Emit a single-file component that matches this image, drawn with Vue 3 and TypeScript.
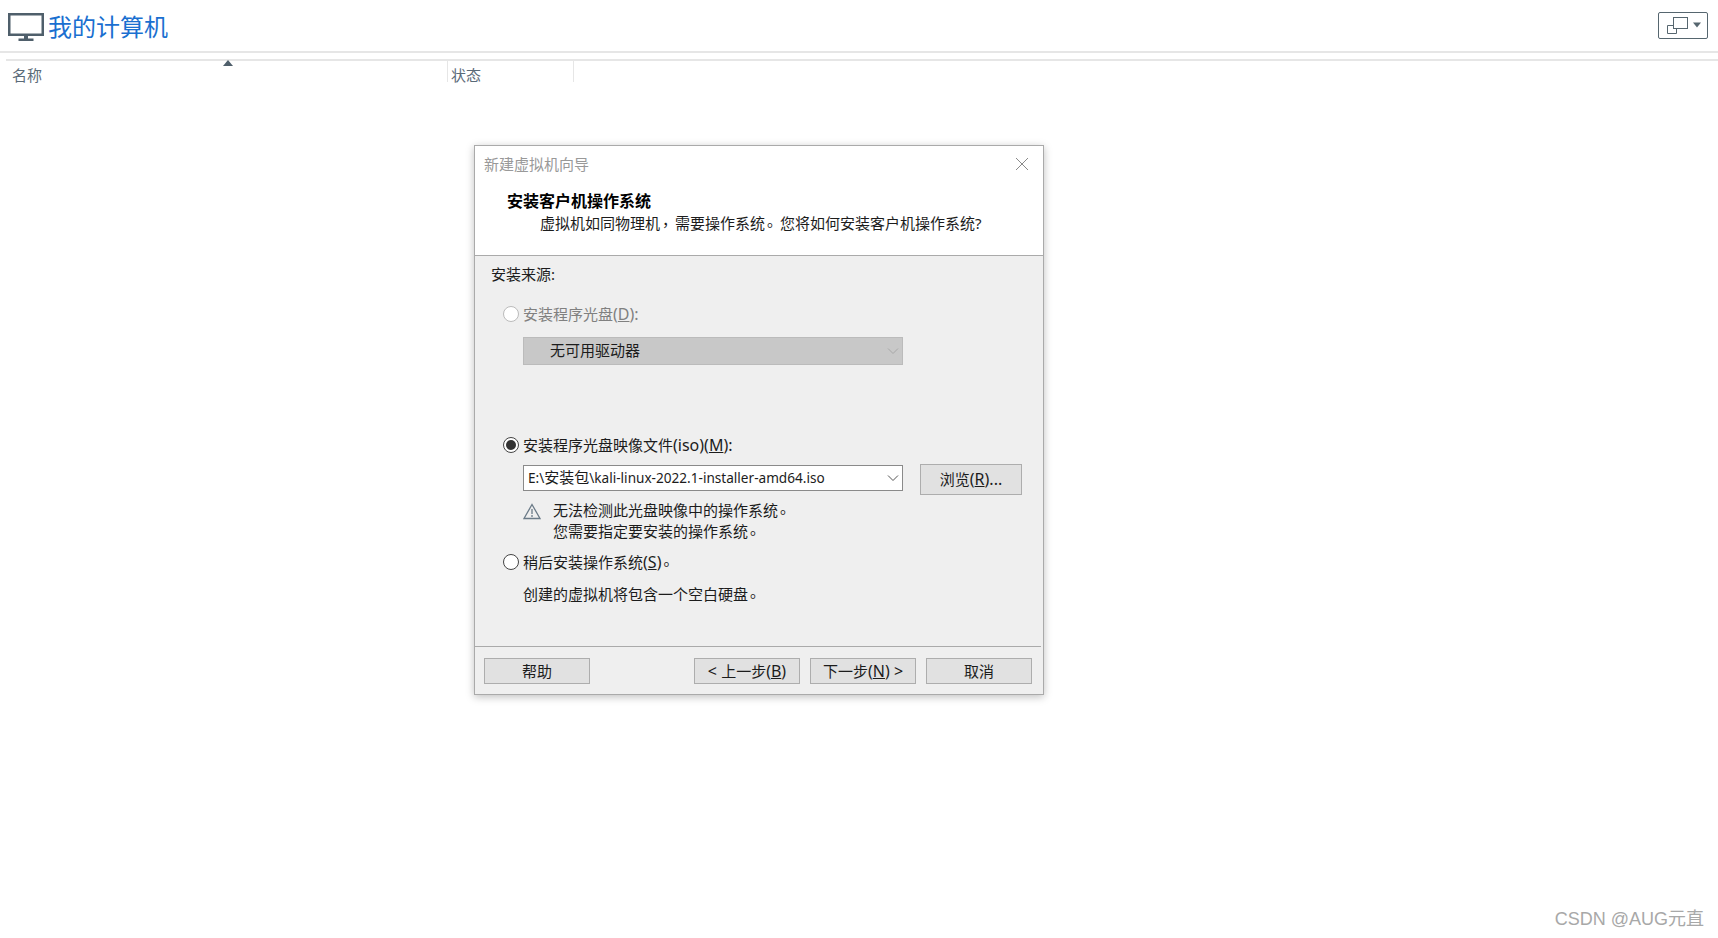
<template>
  <div class="page">
    <header class="top">
      <div class="title-wrap">
        <svg class="monitor" width="36" height="28" viewBox="0 0 36 28">
          <rect x="1.25" y="1.25" width="33.5" height="20.5" fill="none" stroke="#4f5f6b" stroke-width="2.5" />
          <rect x="16" y="22" width="4" height="4" fill="#4f5f6b" />
          <rect x="10.5" y="25.5" width="15" height="2.5" fill="#4f5f6b" />
        </svg>
        <span class="title">我的计算机</span>
      </div>
      <button class="view-btn">
        <svg width="36" height="19" viewBox="0 0 36 19">
          <rect x="7.5" y="1.5" width="14" height="11" fill="#fff" stroke="#56666f" />
          <path d="M7 9.5H1.5V17.5H10.5V13" fill="none" stroke="#56666f" />
          <path d="M27 6.5h8l-4 5z" fill="#56666f" />
        </svg>
      </button>
    </header>

    <div class="columns">
      <div class="col col-name">
        <span>名称</span>
        <i class="sort-arrow"></i>
      </div>
      <div class="col col-state"><span>状态</span></div>
    </div>

    <section class="dialog">
      <div class="dialog-head">
        <div class="titlebar">
          <span class="titlebar-text">新建虚拟机向导</span>
          <svg width="14" height="14" viewBox="0 0 14 14">
            <path d="M1 1l12 12M13 1L1 13" stroke="#8a8a8a" stroke-width="1" fill="none" />
          </svg>
        </div>
        <div class="heading">安装客户机操作系统</div>
        <div class="subheading">虚拟机如同物理机<span class="punct">，</span>需要操作系统<span class="punct">。</span>您将如何安装客户机操作系统?</div>
      </div>

      <div class="dialog-body">
        <div class="line source">安装来源:</div>

        <label class="line option option-disc disabled">
          <span class="radio"></span>
          <span>安装程序光盘<span class="latin">(<u>D</u>):</span></span>
        </label>
        <div class="select select-off">
          <span class="select-text">无可用驱动器</span>
          <svg width="12" height="8" viewBox="0 0 12 8"><path d="M1 1.5l5 5 5-5" fill="none" stroke="#a8a8a8" /></svg>
        </div>

        <label class="line option option-iso">
          <span class="radio checked"><span class="dot"></span></span>
          <span>安装程序光盘映像文件<span class="latin">(iso)(<u>M</u>):</span></span>
        </label>
        <div class="iso-row">
          <div class="select select-on">
            <span class="select-text">E:\<span class="cjk">安装包</span>\kali-linux-2022.1-installer-amd64.iso</span>
            <svg width="12" height="8" viewBox="0 0 12 8"><path d="M1 1.5l5 5 5-5" fill="none" stroke="#555" /></svg>
          </div>
          <button class="btn browse"><span class="btn-text">浏览<span class="latin">(<u>R</u>)...</span></span></button>
        </div>
        <div class="warning">
          <svg width="18" height="17" viewBox="0 0 18 17">
            <path d="M9 1.5L17 15.5H1z" fill="none" stroke="#6b7b88" stroke-width="1.3" />
            <path d="M9 6v5M9 12v2" stroke="#6b7b88" stroke-width="1.3" />
          </svg>
          <div class="warning-text">
            <div>无法检测此光盘映像中的操作系统<span class="punct">。</span></div>
            <div>您需要指定要安装的操作系统<span class="punct">。</span></div>
          </div>
        </div>

        <label class="line option option-later">
          <span class="radio"></span>
          <span>稍后安装操作系统<span class="latin">(<u>S</u>)</span><span class="punct">。</span></span>
        </label>
        <div class="line blank-note">创建的虚拟机将包含一个空白硬盘<span class="punct">。</span></div>
      </div>

      <footer class="dialog-foot">
        <button class="btn"><span class="btn-text">帮助</span></button>
        <div class="foot-right">
          <button class="btn"><span class="btn-text"><span class="latin">&lt; </span>上一步<span class="latin">(<u>B</u>)</span></span></button>
          <button class="btn"><span class="btn-text">下一步<span class="latin">(<u>N</u>) &gt;</span></span></button>
          <button class="btn"><span class="btn-text">取消</span></button>
        </div>
      </footer>
    </section>

    <div class="watermark">CSDN @AUG元直</div>
  </div>
</template>

<script setup lang="ts">
</script>

<style>
html,
body {
  margin: 0;
  background: #fff;
}
</style>

<style scoped>
.page {
  position: relative;
  width: 1718px;
  height: 938px;
  overflow: hidden;
  background: #fff;
  font-family: "Noto Sans", "Noto Sans CJK SC", sans-serif;
  color: #1c1c1c;
}

.top {
  display: flex;
  align-items: center;
  justify-content: space-between;
  height: 53px;
  box-sizing: border-box;
  padding: 2px 10px 0 8px;
  border-bottom: 2px solid #e6e6e6;
}

.title-wrap {
  display: flex;
  align-items: center;
  gap: 4px;
}

.title {
  font-size: 24px;
  line-height: 32px;
  color: #1a6fd0;
}

.view-btn {
  display: flex;
  align-items: center;
  justify-content: center;
  width: 50px;
  height: 27px;
  margin-top: -3px;
  padding: 0 0 0 2px;
  background: #fff;
  border: 1px solid #56666f;
  border-radius: 2px;
}

.columns {
  display: flex;
  height: 21px;
  margin: 6px 0 0 6px;
  border-top: 2px solid #e6e6e6;
  font-size: 15px;
  color: #5a6a78;
}

.col {
  position: relative;
  box-sizing: border-box;
  line-height: 28px;
  border-right: 1px solid #e6e6e6;
}

.col-name {
  width: 442px;
  padding-left: 6px;
}

.col-state {
  width: 126px;
  padding-left: 3px;
}

.sort-arrow {
  position: absolute;
  top: -1px;
  left: 217px;
  border-left: 5px solid transparent;
  border-right: 5px solid transparent;
  border-bottom: 6px solid #4f5f6b;
}

.dialog {
  position: absolute;
  top: 145px;
  left: 474px;
  display: flex;
  flex-direction: column;
  width: 570px;
  height: 550px;
  box-sizing: border-box;
  border: 1px solid #aaa;
  background: #efefef;
  box-shadow: 0 2px 8px rgba(0, 0, 0, 0.25);
  font-size: 15px;
}

.dialog-head {
  height: 110px;
  box-sizing: border-box;
  background: #fff;
  border-bottom: 1px solid #aaa;
}

.titlebar {
  display: flex;
  align-items: center;
  justify-content: space-between;
  height: 36px;
  padding: 0 14px 0 9px;
  font-size: 15px;
  color: #999;
}

.titlebar-text {
  padding-bottom: 2px;
}

.heading {
  padding: 8px 0 0 32px;
  font-size: 16px;
  font-weight: 700;
  line-height: 22px;
  color: #000;
}

.subheading {
  padding-left: 65px;
  line-height: 22px;
}

.punct {
  position: relative;
  top: -3px;
  left: 2px;
}

.latin {
  font-size: 16px;
}

.cjk {
  font-size: 15px;
}

.dialog-body {
  flex: 1;
  padding: 8px 0 0 16px;
}

.line {
  line-height: 20px;
}

.option {
  position: relative;
  display: flex;
  align-items: center;
  padding-left: 32px;
}

.option.disabled {
  color: #808080;
}

.option-disc {
  margin-top: 20px;
}

.option-iso {
  margin-top: 70px;
}

.option-later {
  margin-top: 10px;
}

.radio {
  position: absolute;
  top: 2px;
  left: 12px;
  display: flex;
  align-items: center;
  justify-content: center;
  width: 16px;
  height: 16px;
  box-sizing: border-box;
  background: #fff;
  border: 1px solid #444;
  border-radius: 50%;
}

.disabled .radio {
  border-color: #bbb;
}

.dot {
  width: 10px;
  height: 10px;
  background: #333;
  border-radius: 50%;
}

.select {
  display: flex;
  align-items: center;
  justify-content: space-between;
  width: 380px;
  box-sizing: border-box;
  margin-left: 32px;
  padding-right: 3px;
  border: 1px solid #aaa;
}

.select-off {
  height: 28px;
  margin-top: 13px;
  padding-left: 26px;
  background: #c8c8c8;
  border-color: #bbb;
}

.select-text {
  padding-bottom: 3px;
}

.select-on {
  align-self: flex-start;
  height: 26px;
  margin-top: 1px;
  padding-left: 4px;
  background: #fff;
  border-color: #8a8a8a;
  font-size: 13.6px;
}

.iso-row {
  display: flex;
  align-items: center;
  gap: 17px;
  height: 31px;
  margin-top: 9px;
}

.btn {
  height: 26px;
  width: 106px;
  padding: 0;
  font: inherit;
  color: #1c1c1c;
  background: #e1e1e1;
  border: 1px solid #adadad;
}

.btn-text {
  display: block;
  padding-bottom: 1px;
}

.browse {
  width: 102px;
  height: 31px;
}

.warning {
  display: flex;
  gap: 12px;
  margin: 5px 0 0 32px;
}

.warning svg {
  margin-top: 3px;
}

.warning-text {
  line-height: 21px;
}

.blank-note {
  margin: 12px 0 0 32px;
}

.dialog-foot {
  display: flex;
  justify-content: space-between;
  height: 48px;
  box-sizing: border-box;
  margin-right: 2px;
  padding: 11px 9px 0 9px;
  border-top: 1px solid #aaa;
}

.foot-right {
  display: flex;
  gap: 10px;
}

.watermark {
  position: absolute;
  top: 907px;
  right: 14px;
  font-family: "Liberation Sans", "Noto Sans CJK SC", sans-serif;
  font-size: 18px;
  line-height: 24px;
  color: #a8a8a8;
}
</style>
